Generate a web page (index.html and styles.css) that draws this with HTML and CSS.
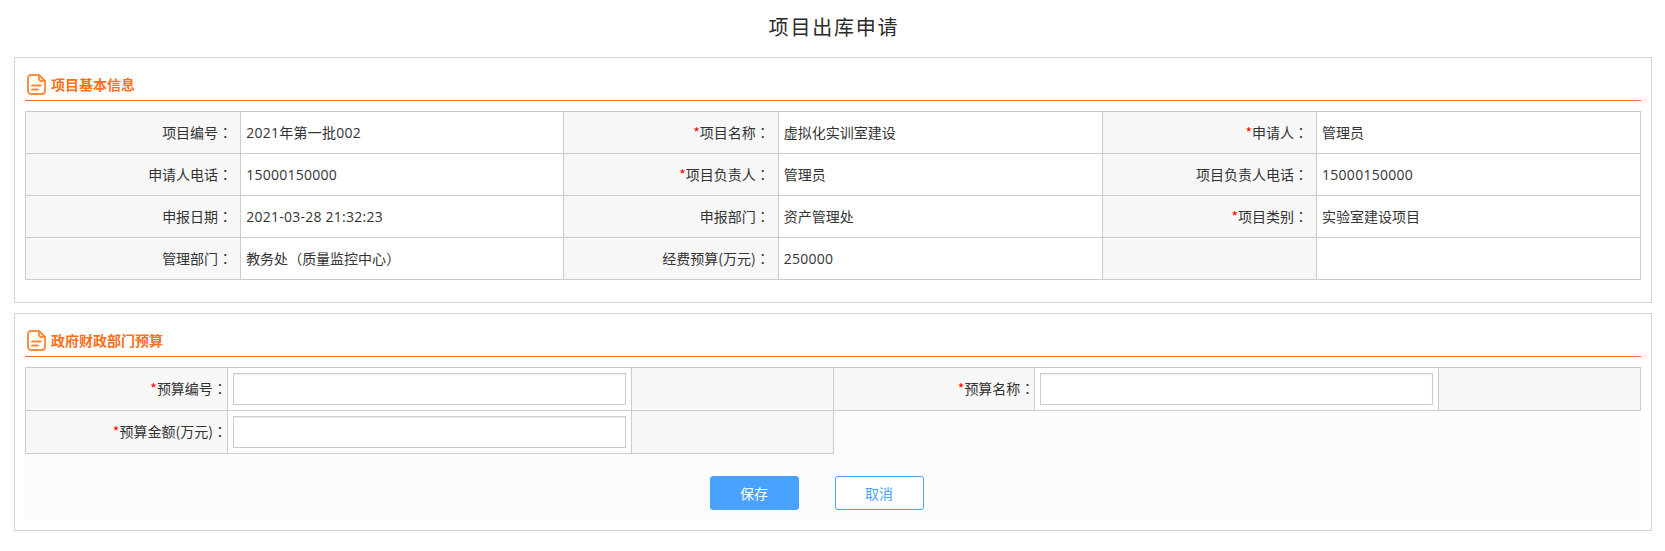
FILE: index.html
```html
<!DOCTYPE html>
<html lang="zh-CN">
<head>
<meta charset="utf-8">
<title>项目出库申请</title>
<link rel="stylesheet" href="styles.css">
</head>
<body>
<h1 class="page-title">项目出库申请</h1>
<section class="panel panel-info">
  <h2 class="panel-head">
    <svg class="doc-icon" viewBox="0 0 19 21" aria-hidden="true"><path d="M4 1H12L18 7V17A3 3 0 0 1 15 20H4A3 3 0 0 1 1 17V4A3 3 0 0 1 4 1Z"/><path d="M12 1V4.5A2.5 2.5 0 0 0 14.5 7H18"/><path d="M5 11.5H14M5 15.5H11"/></svg>
    项目基本信息
  </h2>
  <table class="grid grid-info">
    <colgroup><col class="c-first"><col class="c-second"><col class="c-l"><col class="c-v"><col class="c-l"><col class="c-v"></colgroup>
    <tr><th>项目编号<span class="p">：</span></th><td class="num">2021年第一批002</td><th><i>*</i>项目名称<span class="p">：</span></th><td>虚拟化实训室建设</td><th><i>*</i>申请人<span class="p">：</span></th><td>管理员</td></tr>
    <tr><th>申请人电话<span class="p">：</span></th><td class="num">15000150000</td><th><i>*</i>项目负责人<span class="p">：</span></th><td>管理员</td><th>项目负责人电话<span class="p">：</span></th><td class="num">15000150000</td></tr>
    <tr><th>申报日期<span class="p">：</span></th><td class="num">2021-03-28 21:32:23</td><th>申报部门<span class="p">：</span></th><td>资产管理处</td><th><i>*</i>项目类别<span class="p">：</span></th><td>实验室建设项目</td></tr>
    <tr><th>管理部门<span class="p">：</span></th><td>教务处<span class="p">（</span>质量监控中心<span class="p">）</span></td><th>经费预算(万元)<span class="p">：</span></th><td class="num">250000</td><th></th><td></td></tr>
  </table>
</section>
<section class="panel panel-budget">
  <h2 class="panel-head">
    <svg class="doc-icon" viewBox="0 0 19 21" aria-hidden="true"><path d="M4 1H12L18 7V17A3 3 0 0 1 15 20H4A3 3 0 0 1 1 17V4A3 3 0 0 1 4 1Z"/><path d="M12 1V4.5A2.5 2.5 0 0 0 14.5 7H18"/><path d="M5 11.5H14M5 15.5H11"/></svg>
    政府财政部门预算
  </h2>
  <form class="budget-form">
    <table class="grid grid-budget">
      <colgroup><col class="b-l"><col class="b-v"><col class="b-l"><col class="b-l"><col class="b-v"><col class="b-l"></colgroup>
      <tr><th><i>*</i>预算编号<span class="p">：</span></th><td><input class="field" type="text"></td><th></th><th><i>*</i>预算名称<span class="p">：</span></th><td><input class="field" type="text"></td><th></th></tr>
      <tr><th><i>*</i>预算金额(万元)<span class="p">：</span></th><td><input class="field" type="text"></td><th></th></tr>
    </table>
    <div class="actions">
      <button class="btn btn-save" type="button">保存</button>
      <button class="btn btn-cancel" type="button">取消</button>
    </div>
  </form>
</section>
</body>
</html>
```
FILE: styles.css
```css
* { box-sizing: border-box; }
html, body { margin: 0; padding: 0; }
body {
  background: #fff;
  color: #333;
  font: 14px/20px "Noto Sans CJK SC", "Noto Sans", sans-serif;
}
.page-title {
  margin: 0;
  height: 57px;
  line-height: 54px;
  padding-left: 3px;
  text-align: center;
  font-size: 20px;
  font-weight: 400;
  letter-spacing: 1.8px;
  color: #2b2b2b;
}
.panel {
  margin: 0 13px 0 14px;
  padding: 0 10px;
  border: 1px solid #d2d2d8;
  background: #fff;
}
.panel-info { height: 246px; margin-bottom: 10px; }
.panel-budget { height: 218px; }
.panel-head {
  display: flex;
  align-items: center;
  gap: 5px;
  margin: 0 0 10px;
  height: 43px;
  padding: 10px 0 0 2px;
  border-bottom: 1px solid #ff6f1a;
  color: #ff6f1a;
  font-size: 14px;
  font-weight: 700;
}
.doc-icon {
  width: 19px;
  height: 21px;
  fill: none;
  stroke: #ff8a3d;
  stroke-width: 1.9;
  stroke-linecap: round;
  stroke-linejoin: round;
  flex: none;
}
.grid {
  width: 100%;
  table-layout: fixed;
  border-collapse: collapse;
}
.grid th, .grid td {
  border: 1px solid #ccc;
  padding: 0 5px 2px;
  font-weight: 400;
  color: #333;
}
.grid th { background: #f7f7f7; text-align: right; padding-right: 8px; }
.grid td { background: #fff; text-align: left; }
.grid td.num {
  font-family: "Open Sans", "Noto Sans CJK SC", sans-serif;
  letter-spacing: .25px;
  padding-bottom: 0;
}
.grid i { font-style: normal; color: #f00; }
.p {
  font-family: "Noto Sans CJK TC", sans-serif;
  font-feature-settings: "locl" 0;
}
.grid-info tr { height: 42px; }
.grid-budget tr { height: 43px; }
.c-first { width: 13.32%; }
.c-second { width: 20.01%; }
.c-l { width: 13.28%; }
.c-v { width: 20.05%; }
.b-l { width: 12.5%; }
.b-v { width: 25%; }
.budget-form { background: #fcfcfc; height: 153px; }
.grid-budget th { padding-right: 0; }
.field {
  display: block;
  width: 100%;
  height: 32px;
  border: 1px solid #ccc;
  background: #fff;
  box-shadow: inset 0 1px 1px rgba(0, 0, 0, .08);
  padding: 0 6px;
  outline: none;
}
.grid-budget td { padding-bottom: 0; }
.actions {
  display: flex;
  justify-content: center;
  gap: 36px;
  margin-top: 22px;
  padding-right: 33px;
}
.btn {
  width: 89px;
  height: 34px;
  border-radius: 3px;
  border: 1px solid #49a2ff;
  font: inherit;
  cursor: pointer;
}
.btn-save { background: #49a2ff; color: #fff; }
.btn-cancel { background: #fff; color: #49a2ff; }
```
